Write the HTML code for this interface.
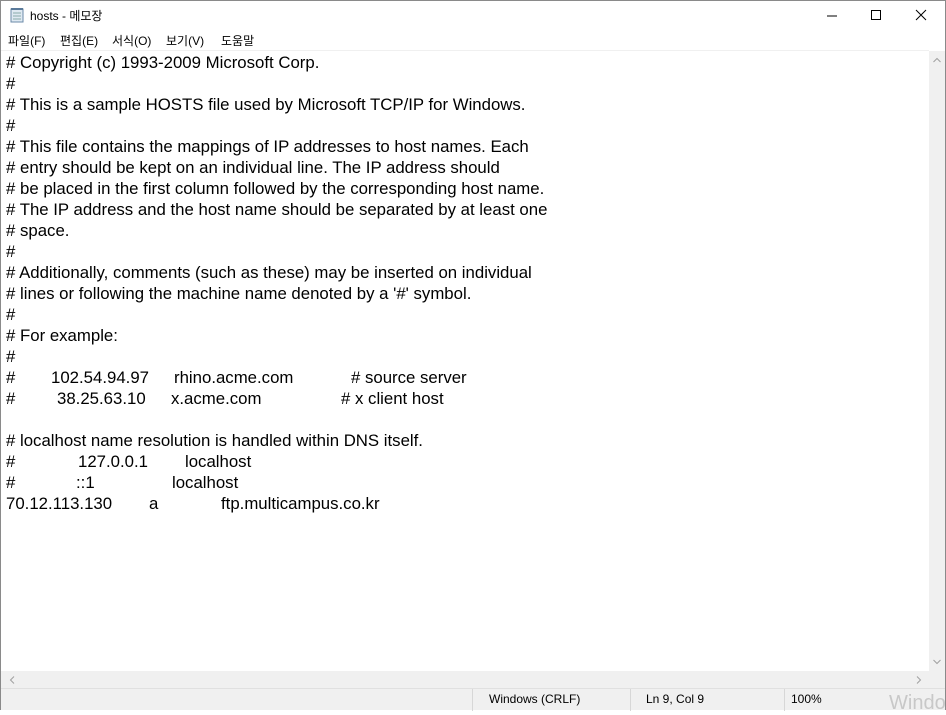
<!DOCTYPE html>
<html><head><meta charset="utf-8"><style>
*{margin:0;padding:0;box-sizing:border-box}
body{width:946px;height:710px;overflow:hidden;background:#fff;font-family:"Segoe UI","Liberation Sans","Noto Sans CJK KR",sans-serif;position:relative}
.win{position:absolute;left:0;top:0;width:946px;height:710px;border:1px solid #8a8a8a;border-bottom:none}
.title{position:absolute;top:0;left:0;right:0;height:30px;font-size:12px;color:#000}
.title span{position:absolute;left:30px;top:7px}
.menu{position:absolute;top:30px;left:0;right:0;height:20px;font-size:12px}
.menu span{position:absolute;top:2px}
.edit{position:absolute;top:50px;left:1px;width:928px;height:621px;border-top:1px solid #f0f0f0}
.edit div{position:absolute;font-size:16.8px;color:#000;white-space:pre;line-height:21px;font-family:"Liberation Sans","Noto Sans CJK KR",sans-serif}
.vs{position:absolute;left:929px;top:51px;width:16px;height:620px;background:#f0f0f0}
.hs{position:absolute;left:1px;top:671px;width:928px;height:17px;background:#f0f0f0}
.corner{position:absolute;left:929px;top:671px;width:16px;height:17px;background:#f0f0f0}
.status{position:absolute;left:1px;top:688px;width:944px;height:22px;background:#f0f0f0;border-top:1px solid #e0e0e0;font-size:12px}
.status span{position:absolute;top:3px}
.sep{position:absolute;top:0;width:1px;height:22px;background:#d7d7d7}
</style></head><body>
<div class="win"></div>
<div class="title">
<svg style="position:absolute;left:9px;top:7px" width="16" height="16"><rect x="2" y="2" width="12" height="13" fill="#dfe9f2" stroke="#6b8aa8"/><path d="M4 6h8M4 9h8M4 12h8" stroke="#8aa" /><path d="M2 2h12" stroke="#5a7a9a" stroke-width="2"/></svg>
<span>hosts - 메모장</span>
<svg style="position:absolute;left:826px;top:10px" width="12" height="12"><path d="M1 6h10" stroke="#000"/></svg>
<svg style="position:absolute;left:870px;top:9px" width="12" height="12"><rect x="1.5" y="1.5" width="9" height="9" fill="none" stroke="#000"/></svg>
<svg style="position:absolute;left:915px;top:9px" width="12" height="12"><path d="M1 1l10 10M11 1L1 11" stroke="#000"/></svg>
</div>
<div class="menu"><span style="left:8px">파일(F)</span><span style="left:60px">편집(E)</span><span style="left:112px">서식(O)</span><span style="left:166px">보기(V)</span><span style="left:221px">도움말</span></div>
<div class="edit">
<div style="left:5px;top:1px"># Copyright (c) 1993-2009 Microsoft Corp.
#
# This is a sample HOSTS file used by Microsoft TCP/IP for Windows.
#
# This file contains the mappings of IP addresses to host names. Each
# entry should be kept on an individual line. The IP address should
# be placed in the first column followed by the corresponding host name.
# The IP address and the host name should be separated by at least one
# space.
#
# Additionally, comments (such as these) may be inserted on individual
# lines or following the machine name denoted by a '#' symbol.
#
# For example:
#
#
#

# localhost name resolution is handled within DNS itself.
#
#
70.12.113.130</div>
<div style="left:50px;top:316px">102.54.94.97</div><div style="left:173px;top:316px">rhino.acme.com</div><div style="left:350px;top:316px"># source server</div>
<div style="left:56px;top:337px">38.25.63.10</div><div style="left:170px;top:337px">x.acme.com</div><div style="left:340px;top:337px"># x client host</div>
<div style="left:77px;top:400px">127.0.0.1</div><div style="left:184px;top:400px">localhost</div>
<div style="left:75px;top:421px">::1</div><div style="left:171px;top:421px">localhost</div>
<div style="left:148px;top:442px">a</div><div style="left:220px;top:442px">ftp.multicampus.co.kr</div>
</div>
<div class="vs"><svg style="position:absolute;left:4px;top:6px" width="8" height="6"><path d="M0.5 5L4 1.5 7.5 5" stroke="#a0a0a0" fill="none"/></svg><svg style="position:absolute;left:4px;top:608px" width="8" height="6"><path d="M0.5 1L4 4.5 7.5 1" stroke="#a0a0a0" fill="none"/></svg></div>
<div class="hs"><svg style="position:absolute;left:8px;top:5px" width="6" height="8"><path d="M5 0.5L1.5 4 5 7.5" stroke="#a0a0a0" fill="none"/></svg><svg style="position:absolute;left:915px;top:5px" width="6" height="8"><path d="M1 0.5L4.5 4 1 7.5" stroke="#a0a0a0" fill="none"/></svg></div>
<div class="corner"></div>
<div class="status">
<div class="sep" style="left:471px"></div><div class="sep" style="left:629px"></div><div class="sep" style="left:783px"></div>
<span style="left:488px">Windows (CRLF)</span><span style="left:645px">Ln 9, Col 9</span><span style="left:790px">100%</span>
<span style="left:888px;top:3px;font-size:20px;color:#c8c8c8">Windo</span>
</div>
</body></html>
